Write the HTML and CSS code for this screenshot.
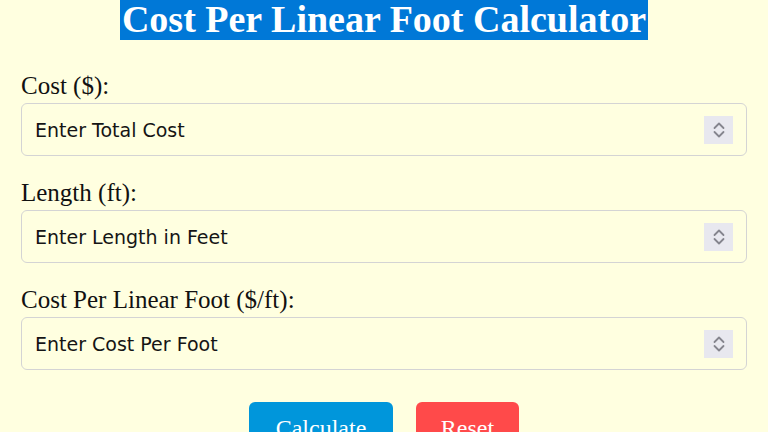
FILE: index.html
```html
<!DOCTYPE html>
<html>
<head>
<meta charset="utf-8">
<link rel="stylesheet" href="styles.css">
</head>
<body>
<div class="page">
  <h1 class="title"><span class="title-text">Cost Per Linear Foot Calculator</span></h1>
  <form class="calc">
    <label class="field-label">Cost ($):</label>
    <div class="field">
      <input class="field-input" type="text" placeholder="Enter Total Cost">
      <span class="spin"><svg width="16" height="22" viewBox="0 0 16 22"><path d="M3.5 9 L8 4.5 L12.5 9 M3.5 13 L8 17.5 L12.5 13" fill="none" stroke="#85858e" stroke-width="1.8" stroke-linecap="round" stroke-linejoin="round"/></svg></span>
    </div>
    <label class="field-label">Length (ft):</label>
    <div class="field">
      <input class="field-input" type="text" placeholder="Enter Length in Feet">
      <span class="spin"><svg width="16" height="22" viewBox="0 0 16 22"><path d="M3.5 9 L8 4.5 L12.5 9 M3.5 13 L8 17.5 L12.5 13" fill="none" stroke="#85858e" stroke-width="1.8" stroke-linecap="round" stroke-linejoin="round"/></svg></span>
    </div>
    <label class="field-label">Cost Per Linear Foot ($/ft):</label>
    <div class="field">
      <input class="field-input" type="text" placeholder="Enter Cost Per Foot">
      <span class="spin"><svg width="16" height="22" viewBox="0 0 16 22"><path d="M3.5 9 L8 4.5 L12.5 9 M3.5 13 L8 17.5 L12.5 13" fill="none" stroke="#85858e" stroke-width="1.8" stroke-linecap="round" stroke-linejoin="round"/></svg></span>
    </div>
    <div class="actions">
      <button type="button" class="btn btn-calc">Calculate</button>
      <button type="reset" class="btn btn-reset">Reset</button>
    </div>
  </form>
</div>
</body>
</html>
```
FILE: styles.css
```css
html, body {
  margin: 0;
  padding: 0;
  background: #ffffe0;
}
.page {
  padding: 0 21px;
  font-family: "Liberation Serif", "Times New Roman", serif;
  color: #111;
}
.title {
  margin: -4px 0 0;
  text-align: center;
  font-size: 38px;
  line-height: 46px;
  font-weight: bold;
}
.title-text {
  background: #0078d7;
  color: #fff;
  padding: 0 2px;
}
.calc {
  display: flex;
  flex-direction: column;
  margin-top: 29px;
}
.field-label {
  font-size: 25px;
  line-height: 30px;
  margin-bottom: 2px;
}
.field {
  display: flex;
  align-items: center;
  height: 51px;
  border: 1px solid #d4d4d4;
  border-radius: 6px;
  padding: 0 13px 0 13px;
  margin-bottom: 22px;
}
.field-input {
  flex: 1;
  min-width: 0;
  border: none;
  outline: none;
  background: transparent;
  font-family: "DejaVu Sans", Verdana, sans-serif;
  font-size: 19px;
  color: #111;
  padding: 0;
}
.field-input::placeholder {
  color: #151515;
  opacity: 1;
}
.spin {
  width: 29px;
  height: 28px;
  background: #e8e8ef;
  display: flex;
  align-items: center;
  justify-content: center;
}
.actions {
  display: flex;
  justify-content: center;
  gap: 23px;
  margin-top: 10px;
}
.btn {
  font-family: "Liberation Serif", "Times New Roman", serif;
  font-size: 24px;
  color: #fff;
  border: none;
  border-radius: 6px;
  padding: 10px 24px;
  height: 52px;
}
.btn-calc {
  background: #0096db;
  width: 144px;
}
.btn-reset {
  background: #ff4a4a;
  width: 103px;
}
```
